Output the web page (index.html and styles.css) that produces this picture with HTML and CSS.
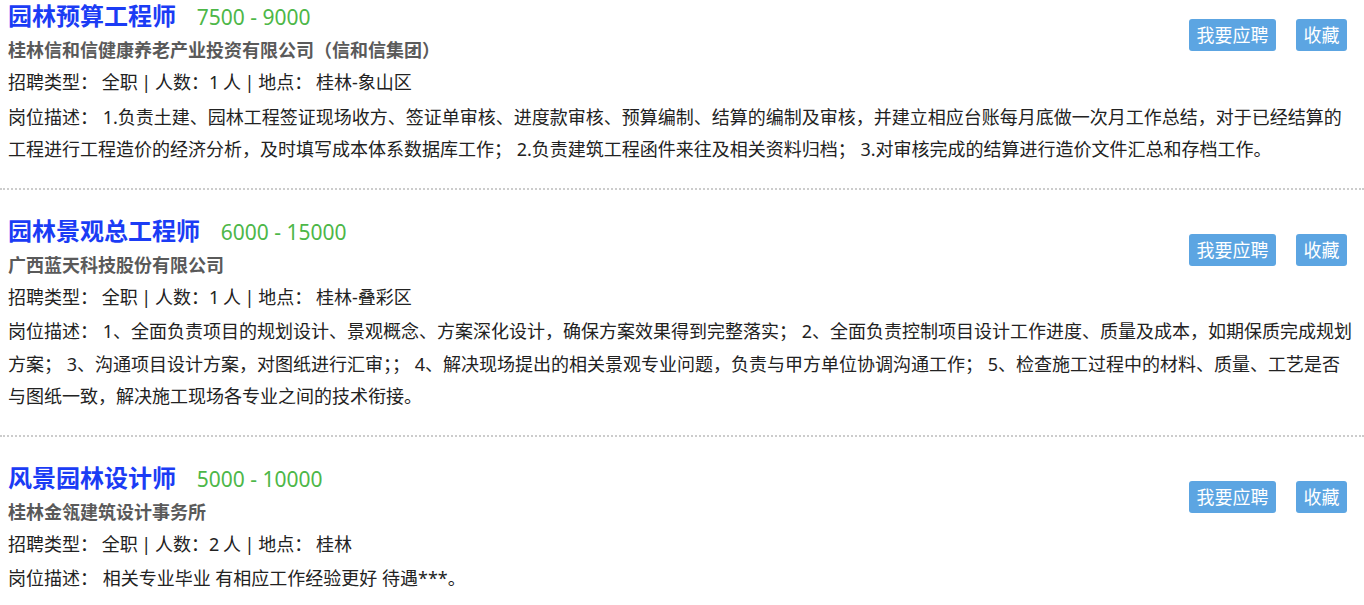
FILE: index.html
```html
<!DOCTYPE html>
<html>
<head>
<meta charset="utf-8">
<title>招聘职位</title>
<link rel="stylesheet" href="styles.css">
</head>
<body>
  <div class="job-list">

    <div class="job">
      <div class="job-head">
        <div class="job-info">
          <div class="job-title">
            <a class="job-name" href="#">园林预算工程师</a>
            <span class="salary">7500 - 9000</span>
          </div>
          <div class="company">桂林信和信健康养老产业投资有限公司（信和信集团）</div>
        </div>
        <div class="actions">
          <a class="btn" href="#">我要应聘</a>
          <a class="btn" href="#">收藏</a>
        </div>
      </div>
      <p class="meta">招聘类型： 全职 | 人数：1 人 | 地点： 桂林-象山区</p>
      <p class="desc">岗位描述： 1.负责土建、园林工程签证现场收方、签证单审核、进度款审核、预算编制、结算的编制及审核，并建立相应台账每月底做一次月工作总结，对于已经结算的工程进行工程造价的经济分析，及时填写成本体系数据库工作； 2.负责建筑工程函件来往及相关资料归档； 3.对审核完成的结算进行造价文件汇总和存档工作。</p>
    </div>

    <div class="job">
      <div class="job-head">
        <div class="job-info">
          <div class="job-title">
            <a class="job-name" href="#">园林景观总工程师</a>
            <span class="salary">6000 - 15000</span>
          </div>
          <div class="company">广西蓝天科技股份有限公司</div>
        </div>
        <div class="actions">
          <a class="btn" href="#">我要应聘</a>
          <a class="btn" href="#">收藏</a>
        </div>
      </div>
      <p class="meta">招聘类型： 全职 | 人数：1 人 | 地点： 桂林-叠彩区</p>
      <p class="desc">岗位描述： 1、全面负责项目的规划设计、景观概念、方案深化设计，确保方案效果得到完整落实； 2、全面负责控制项目设计工作进度、质量及成本，如期保质完成规划方案； 3、沟通项目设计方案，对图纸进行汇审；； 4、解决现场提出的相关景观专业问题，负责与甲方单位协调沟通工作； 5、检查施工过程中的材料、质量、工艺是否与图纸一致，解决施工现场各专业之间的技术衔接。</p>
    </div>

    <div class="job">
      <div class="job-head">
        <div class="job-info">
          <div class="job-title">
            <a class="job-name" href="#">风景园林设计师</a>
            <span class="salary">5000 - 10000</span>
          </div>
          <div class="company">桂林金瓴建筑设计事务所</div>
        </div>
        <div class="actions">
          <a class="btn" href="#">我要应聘</a>
          <a class="btn" href="#">收藏</a>
        </div>
      </div>
      <p class="meta">招聘类型： 全职 | 人数：2 人 | 地点： 桂林</p>
      <p class="desc">岗位描述： 相关专业毕业 有相应工作经验更好 待遇***。</p>
    </div>

  </div>
</body>
</html>
```

FILE: styles.css
```css
body {
  margin: 0;
  padding: 0;
  font-family: "Noto Sans", "Noto Sans CJK SC", sans-serif;
  font-size: 18px;
  line-height: 1.8;
  color: #222;
  background: #fff;
}
.job {
  padding: 25px 8px 22px 8px;
  border-bottom: 2px dotted #ccc;
}
.job:first-child {
  padding-top: 0;
}
.job:last-child {
  border-bottom: none;
}
.job-head {
  display: flex;
  justify-content: space-between;
  align-items: flex-start;
}
.job-title {
  height: 32px;
  line-height: 32px;
  white-space: nowrap;
}
.job-name {
  font-size: 24px;
  font-weight: bold;
  color: #1b3cf5;
  text-decoration: none;
}
.salary {
  margin-left: 16px;
  font-size: 21px;
  color: #4db748;
}
.company {
  margin-top: 2px;
  font-weight: bold;
  color: #5a5a5a;
}
.actions {
  display: flex;
  gap: 20px;
  margin-top: 19px;
  margin-right: 9px;
}
.btn {
  display: inline-block;
  height: 32px;
  line-height: 32px;
  padding: 0 7.5px;
  background-color: #5ca5e2;
  color: #fff;
  text-decoration: none;
  border-radius: 3px;
}
.meta {
  margin: 0;
  word-spacing: -1px;
}
.desc {
  margin: 2px 0 0 0;
}
```
